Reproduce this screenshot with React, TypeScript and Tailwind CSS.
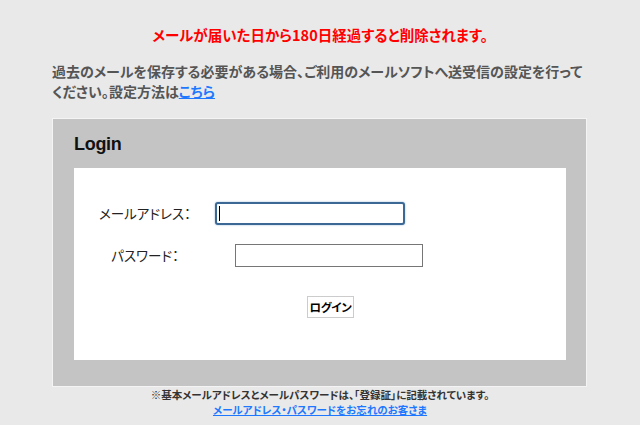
import React from 'react'

const jp = "font-['Noto_Sans_CJK_JP','Noto_Sans',sans-serif] [font-feature-settings:'palt']"

export default function App() {
  return (
    <div className={`min-h-[425px] w-full bg-[#e9e9e9] pt-[26px] ${jp}`}>
      <p className="text-center text-[14.5px] font-bold leading-[18px] text-[#ff0000]">
        メールが届いた日から180日経過すると削除されます。
      </p>

      <p className="mx-[52px] mt-[17px] text-[14px] font-bold leading-[20px] text-[#555555]">
        過去のメールを保存する必要がある場合、ご利用のメールソフトへ送受信の設定を行って
        <br />
        ください。設定方法は
        <a href="#" className="text-[#1e78ff] underline">
          こちら
        </a>
      </p>

      <LoginPanel />

      <div className="text-center">
        <p className="text-[10.5px] font-bold leading-[15px] text-[#333333]">
          ※基本メールアドレスとメールパスワードは、「登録証」に記載されています。
        </p>
        <a href="#" className="block text-[10.5px] font-bold leading-[16px] text-[#1e78ff] underline">
          メールアドレス・パスワードをお忘れのお客さま
        </a>
      </div>
    </div>
  )
}

function LoginPanel() {
  return (
    <div className="mx-[52px] mt-[17px] w-[535px] border border-[#f4f4f4] bg-[#c4c4c4] pb-[26px] pl-[21px] pr-[20px] pt-[13px]">
      <h2 className="mb-[12px] font-['Liberation_Sans',sans-serif] text-[18px] font-bold leading-[24px] tracking-[-0.3px] text-[#111111]">
        Login
      </h2>

      <div className="bg-white pb-[42px] pt-[34px]">
        {/* メールアドレス */}
        <div className="flex h-[23px] items-center">
          <label className="w-[142px] text-center text-[13.5px] text-[#222222]">メールアドレス：</label>
          <div className="relative -ml-[1px]">
            <input
              type="text"
              className="block h-[23px] w-[190px] rounded-[3px] border-2 border-[#3b6894] bg-white shadow-[0_0_2px_#8fb1d6] outline-none"
            />
            <span className="absolute left-[4px] top-[4px] h-[15px] w-px bg-black" />
          </div>
        </div>

        {/* パスワード */}
        <div className="mt-[19px] flex h-[23px] items-center">
          <label className="w-[142px] text-center text-[13.5px] text-[#222222]">パスワード：</label>
          <input
            type="password"
            className="ml-[19px] block h-[23px] w-[188px] border border-[#767676] bg-white outline-none"
          />
        </div>

        <div className="mt-[29px] flex justify-center pl-[21px]">
          <button
            type="button"
            className="h-[22px] whitespace-nowrap border border-[#cccccc] bg-white px-[1px] text-[11.5px] font-bold leading-[20px] tracking-[-0.3px] text-black"
          >
            ログイン
          </button>
        </div>
      </div>
    </div>
  )
}
